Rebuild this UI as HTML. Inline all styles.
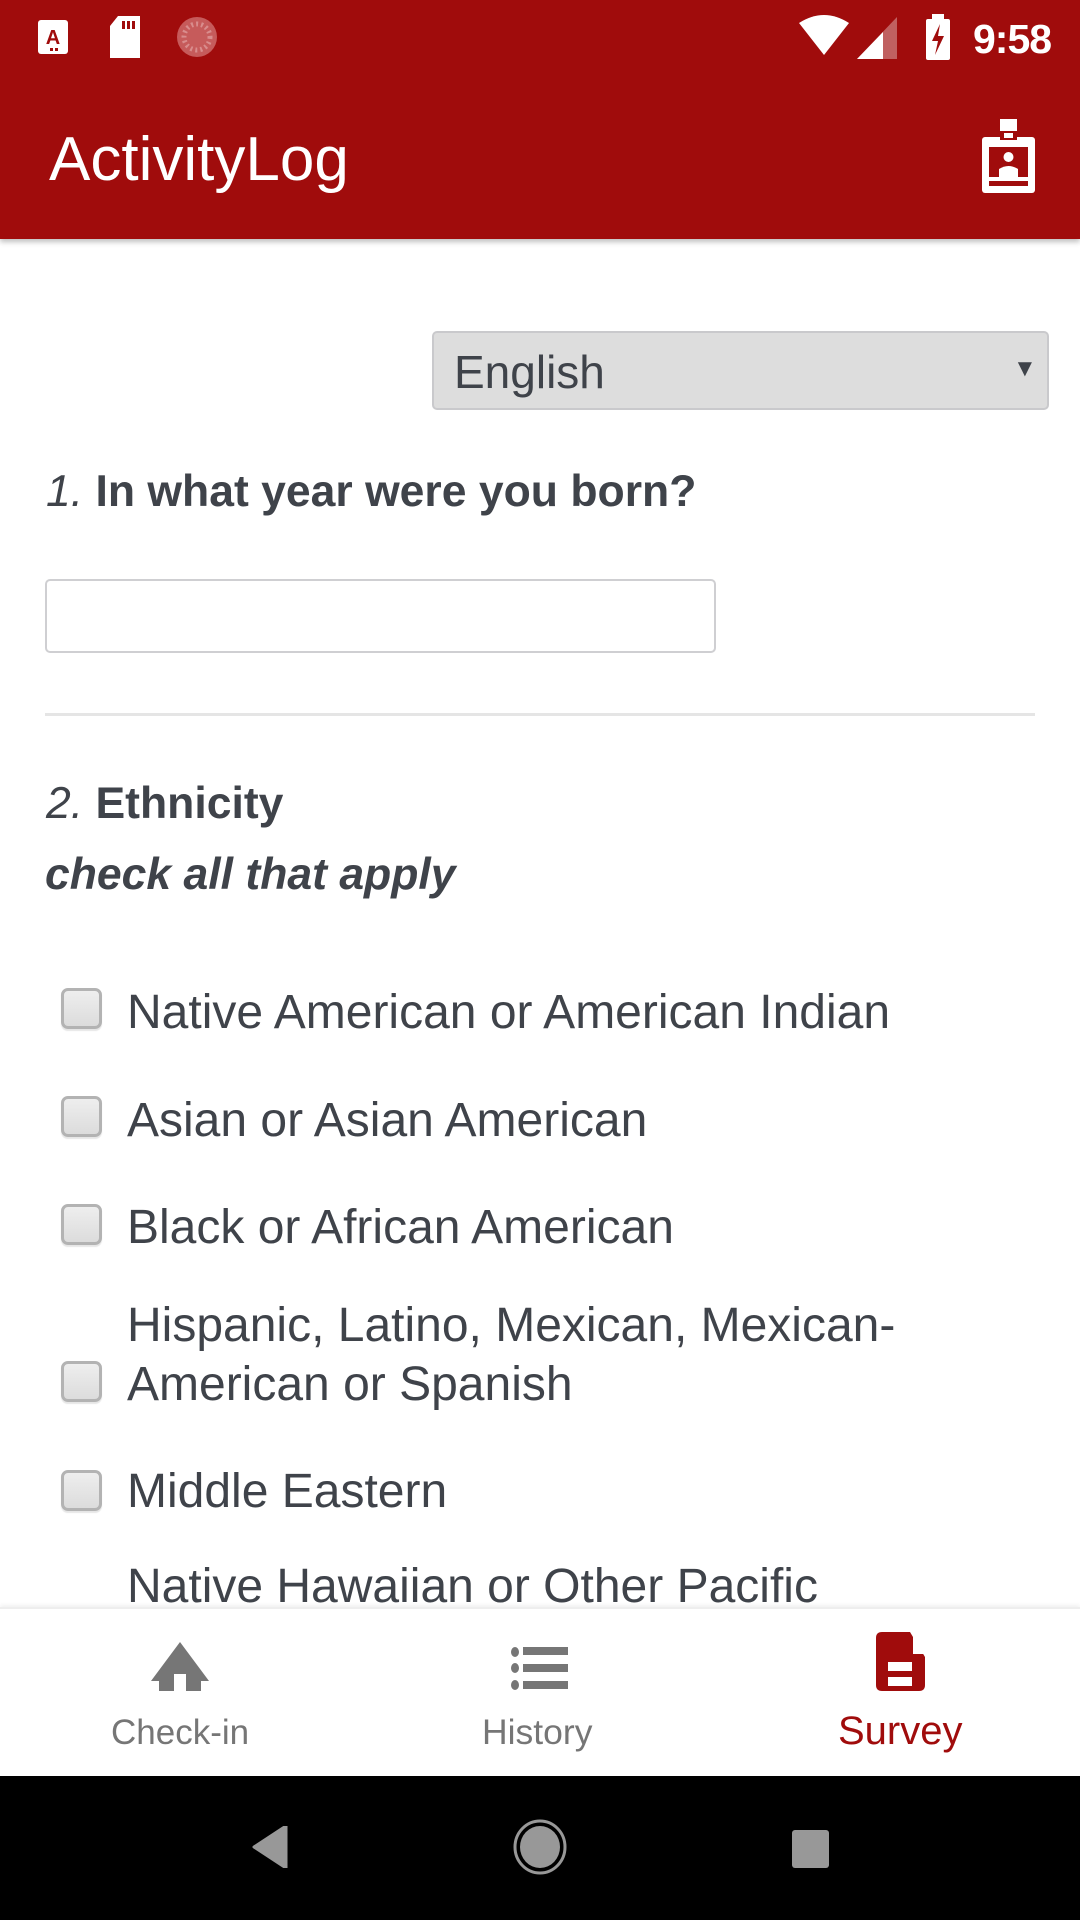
<!DOCTYPE html>
<html><head><meta charset="utf-8"><style>
*{margin:0;padding:0;box-sizing:border-box}
body{width:1080px;height:1920px;position:relative;overflow:hidden;background:#fff;font-family:"Liberation Sans",sans-serif;color:#3f434a}
.a{position:absolute;line-height:1;white-space:nowrap}
.cb{position:absolute;left:61px;width:41px;height:41px;border:3px solid #b3b3b3;border-radius:7px;background:linear-gradient(#eee,#dcdcdc);box-shadow:0 2px 1px #e6e6e6}
.opt{font-size:48px;left:127px}
</style></head><body>
<div style="position:absolute;left:0;top:0;width:1080px;height:239px;background:#a00c0c;box-shadow:0 3px 5px rgba(0,0,0,.25)"></div>
<svg class="a" style="left:36px;top:18px" width="36" height="38" viewBox="0 0 36 38"><rect x="2" y="2" width="30" height="34" rx="3" fill="#fff"/><text x="17" y="26" font-size="20" font-weight="bold" text-anchor="middle" fill="#a00c0c" font-family="Liberation Sans">A</text><rect x="14" y="30" width="3" height="3" fill="#a00c0c"/><rect x="19" y="30" width="3" height="3" fill="#a00c0c"/></svg>
<svg class="a" style="left:108px;top:14px" width="36" height="46" viewBox="0 0 36 46"><path d="M10 2H32V44H2V12Z" fill="#fff"/><rect x="14" y="7" width="3" height="8" fill="#a00c0c"/><rect x="19" y="7" width="3" height="8" fill="#a00c0c"/><rect x="24" y="7" width="3" height="8" fill="#a00c0c"/></svg>
<svg class="a" style="left:175px;top:15px" width="44" height="44"><circle cx="22" cy="22" r="20" fill="#c65b5b"/><circle cx="22" cy="22" r="13" fill="none" stroke="#d98d8d" stroke-width="5" stroke-dasharray="2 3"/></svg>
<svg class="a" style="left:797px;top:15px" width="54" height="42" viewBox="0 0 54 42"><path d="M2 8Q27 -8 52 8L27 40Z" fill="#fff"/></svg>
<svg class="a" style="left:857px;top:17px" width="42" height="42"><path d="M0 42L40 0V42Z" fill="#c06060"/><path d="M0 42L26 15V42Z" fill="#fff"/></svg>
<svg class="a" style="left:925px;top:14px" width="26" height="46"><rect x="7" y="0" width="12" height="6" fill="#fff"/><rect x="1" y="5" width="24" height="41" rx="2" fill="#fff"/><path d="M15 10L7 27H13L10 41L19 22H13Z" fill="#a00c0c"/></svg>
<div class="a" style="left:973px;top:19px;font-size:41px;color:#fff;font-weight:bold;letter-spacing:-1px">9:58</div>
<div class="a" style="left:49px;top:129px;font-size:62px;color:#fff">ActivityLog</div>
<svg class="a" style="left:982px;top:119px" width="53" height="74" viewBox="0 0 53 74"><rect x="18" y="0" width="17" height="12" fill="#fff"/><rect x="0" y="18" width="53" height="56" rx="3" fill="#fff"/><rect x="18" y="12" width="17" height="9" fill="#a00c0c"/><rect x="22" y="14" width="9" height="5" fill="#fff"/><rect x="7" y="28" width="39" height="30" fill="#a00c0c"/><circle cx="26.5" cy="38" r="5" fill="#fff"/><path d="M17 58V50Q26.5 44 36 50V58Z" fill="#fff"/><rect x="7" y="62" width="39" height="5" fill="#a00c0c"/></svg>
<div style="position:absolute;left:432px;top:331px;width:617px;height:79px;background:#dddddd;border:2px solid #c9c9cc;border-radius:5px"></div>
<div class="a" style="left:454px;top:349px;font-size:46px">English</div>
<div class="a" style="left:1013px;top:357px;font-size:24px">▼</div>
<div class="a" style="left:46px;top:470px;font-size:44.5px"><span style="font-style:italic;font-weight:normal">1.</span> <b>In what year were you born?</b></div>
<div style="position:absolute;left:45px;top:579px;width:671px;height:74px;border:2px solid #cfcfd2;border-radius:5px"></div>
<div style="position:absolute;left:45px;top:713px;width:990px;height:3px;background:#e5e5e5"></div>
<div class="a" style="left:46px;top:782px;font-size:44.5px"><span style="font-style:italic">2.</span> <b>Ethnicity</b></div>
<div class="a" style="left:45px;top:853px;font-size:44.5px;font-weight:bold;font-style:italic">check all that apply</div>
<div class="cb" style="top:988px"></div><div class="a opt" style="top:989px">Native American or American Indian</div>
<div class="cb" style="top:1096px"></div><div class="a opt" style="top:1097px">Asian or Asian American</div>
<div class="cb" style="top:1204px"></div><div class="a opt" style="top:1204px">Black or African American</div>
<div class="cb" style="top:1361px"></div><div class="a opt" style="top:1302px">Hispanic, Latino, Mexican, Mexican-</div><div class="a opt" style="top:1361px">American or Spanish</div>
<div class="cb" style="top:1470px"></div><div class="a opt" style="top:1468px">Middle Eastern</div>
<div class="a opt" style="top:1563px">Native Hawaiian or Other Pacific</div>
<div style="position:absolute;left:0;top:1607px;width:1080px;height:169px;background:#fff;border-top:2px solid #eee;box-shadow:0 -2px 4px rgba(0,0,0,.06)"></div>
<svg class="a" style="left:150px;top:1641px" width="60" height="50" viewBox="0 0 60 50"><path d="M30 1L59 40H51V50H36V33H24V50H9V40H1Z" fill="#767676"/></svg>
<svg class="a" style="left:511px;top:1647px" width="57" height="43" viewBox="0 0 57 43"><ellipse cx="4" cy="5" rx="4" ry="5" fill="#767676"/><ellipse cx="4" cy="21" rx="4" ry="5" fill="#767676"/><ellipse cx="4" cy="38" rx="4" ry="5" fill="#767676"/><rect x="12" y="0" width="45" height="8" fill="#767676"/><rect x="12" y="17" width="45" height="8" fill="#767676"/><rect x="12" y="34" width="45" height="8" fill="#767676"/></svg>
<svg class="a" style="left:876px;top:1632px" width="49" height="59" viewBox="0 0 49 59"><path d="M6 0H34L49 25V53Q49 59 43 59H6Q0 59 0 53V6Q0 0 6 0Z" fill="#a00c0c"/><path d="M37 2V22H48Z" fill="#fff"/><rect x="12" y="30" width="24" height="9" fill="#fff"/><rect x="12" y="45" width="24" height="9" fill="#fff"/></svg>
<div class="a" style="left:111px;top:1715px;font-size:35px;color:#767676">Check-in</div>
<div class="a" style="left:482px;top:1715px;font-size:35.5px;color:#767676">History</div>
<div class="a" style="left:838px;top:1711px;font-size:40px;color:#a00c0c">Survey</div>
<div style="position:absolute;left:0;top:1776px;width:1080px;height:144px;background:#000"></div>
<svg class="a" style="left:252px;top:1826px" width="36" height="42"><path d="M34 0V42L2 21Z" fill="#989898" stroke="#989898" stroke-width="3" stroke-linejoin="round"/></svg>
<svg class="a" style="left:512px;top:1818px" width="56" height="58"><ellipse cx="28" cy="29" rx="25" ry="26" fill="none" stroke="#989898" stroke-width="3"/><ellipse cx="28" cy="29" rx="20" ry="21" fill="#989898"/></svg>
<div style="position:absolute;left:792px;top:1830px;width:37px;height:38px;background:#989898;border-radius:3px"></div>
</body></html>
